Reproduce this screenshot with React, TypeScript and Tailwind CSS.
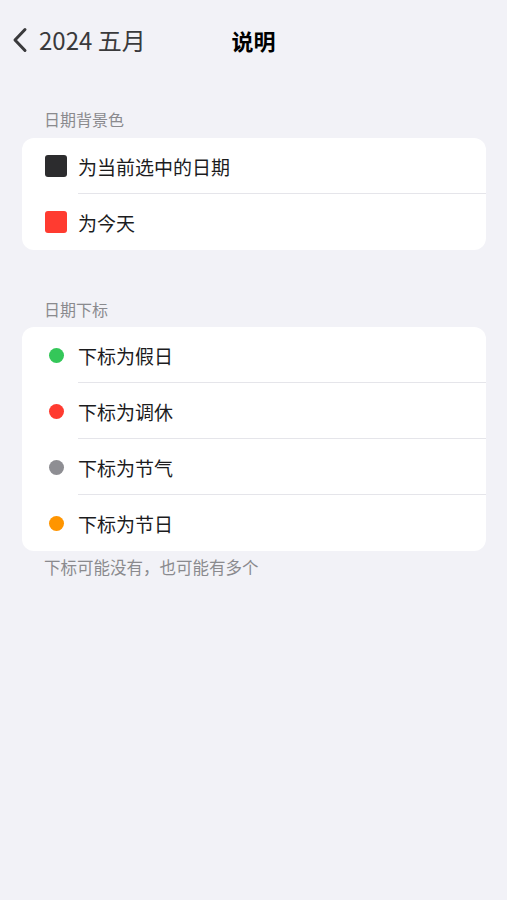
import React from "react";

const font = { fontFamily: '"Noto Sans CJK SC", "Noto Sans", sans-serif' };

function Row({ icon, label, sep }: { icon: React.ReactNode; label: string; sep: boolean }) {
  return (
    <div className="relative flex h-[56px] items-center">
      <div className="flex w-[56px] items-center justify-center pl-[12px]">{icon}</div>
      <div className="text-[19px] leading-none text-[#1c1c1e]">{label}</div>
      {sep && <div className="absolute bottom-0 left-[56px] right-0 h-px bg-[#e5e5ea]" />}
    </div>
  );
}

const Square = ({ c }: { c: string }) => <div className={`h-[22px] w-[22px] rounded-[3px] ${c}`} />;
const Dot = ({ c }: { c: string }) => <div className={`h-[15px] w-[15px] rounded-full ${c}`} />;

export default function App() {
  return (
    <div className="min-h-[900px] w-full bg-[#f2f2f7]" style={font}>
      <div className="relative flex h-[80px] items-center">
        <div className="flex items-center pl-[11px] text-[#3a3a3c]">
          <svg width="18" height="26" viewBox="0 0 18 26" fill="none">
            <path d="M14 2.5 L4 13 L14 23.5" stroke="#3a3a3c" strokeWidth="3" strokeLinecap="round" strokeLinejoin="round" />
          </svg>
          <span className="ml-[10px] text-[24px] leading-none">2024 五月</span>
        </div>
        <div className="absolute left-0 right-0 text-center text-[22px] font-bold leading-none text-black">说明</div>
      </div>

      <div className="pl-[22px] pr-[21px] pt-[31px]">
        <div className="pl-[22px] text-[16px] leading-none text-[#8a8a8e]">日期背景色</div>
        <div className="mt-[11px] overflow-hidden rounded-[12px] bg-white">
          <Row icon={<Square c="bg-[#2c2c2e]" />} label="为当前选中的日期" sep />
          <Row icon={<Square c="bg-[#ff3b30]" />} label="为今天" sep={false} />
        </div>

        <div className="mt-[51px] pl-[22px] text-[16px] leading-none text-[#8a8a8e]">日期下标</div>
        <div className="mt-[10px] overflow-hidden rounded-[12px] bg-white">
          <Row icon={<Dot c="bg-[#34c759]" />} label="下标为假日" sep />
          <Row icon={<Dot c="bg-[#ff3b30]" />} label="下标为调休" sep />
          <Row icon={<Dot c="bg-[#8e8e93]" />} label="下标为节气" sep />
          <Row icon={<Dot c="bg-[#ff9500]" />} label="下标为节日" sep={false} />
        </div>
        <div className="mt-[8px] pl-[22px] text-[16.5px] leading-none text-[#8a8a8e]">下标可能没有，也可能有多个</div>
      </div>
    </div>
  );
}
